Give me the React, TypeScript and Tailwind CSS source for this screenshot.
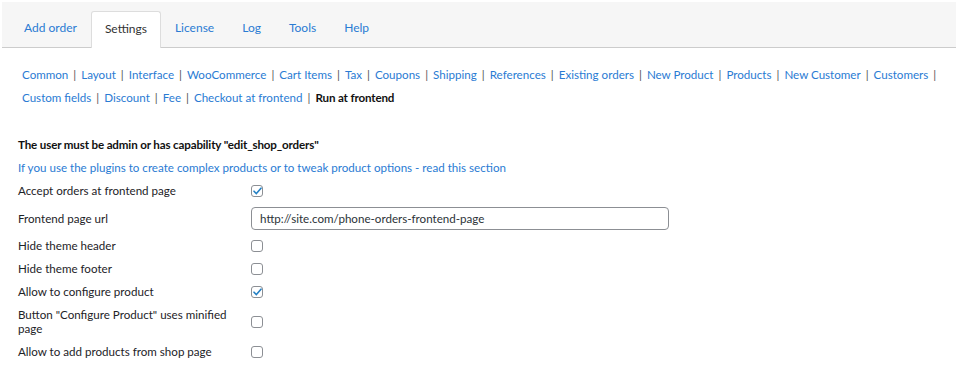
import React from "react";

const tabs = ["Add order", "Settings", "License", "Log", "Tools", "Help"];
const links1 = [
  "Common",
  "Layout",
  "Interface",
  "WooCommerce",
  "Cart Items",
  "Tax",
  "Coupons",
  "Shipping",
  "References",
  "Existing orders",
  "New Product",
  "Products",
  "New Customer",
  "Customers",
];
const links2 = ["Custom fields", "Discount", "Fee", "Checkout at frontend"];

function Checkbox({ checked }: { checked?: boolean }) {
  return (
    <span className="inline-flex h-[12px] w-[12px] items-center justify-center rounded-[3px] border border-[#8c8f94] bg-white">
      {checked && (
        <svg width="9" height="8" viewBox="0 0 9 8" fill="none">
          <path d="M1 4.2 L3.4 6.6 L8 1.2" stroke="#2581c4" strokeWidth="1.6" strokeLinecap="round" strokeLinejoin="round" />
        </svg>
      )}
    </span>
  );
}

function Row({ label, children }: { label: React.ReactNode; children: React.ReactNode }) {
  return (
    <div className="flex items-center pt-[5px] pb-[4px]">
      <div className="w-[233px] shrink-0 pr-[14px] leading-[14px]">{label}</div>
      <div className="flex items-center">{children}</div>
    </div>
  );
}

export default function App() {
  return (
    <div
      className="min-h-[376px] w-[958px] bg-white text-[11.6px] text-[#1d2327]"
      style={{ fontFamily: 'Lato, "Open Sans", sans-serif' }}
    >
      <div className="px-[2px] pt-[2px] text-[12px]">
        <div className="flex h-[46px] items-end border-b border-[#cccccc] bg-[#f6f6f6] pl-[8px]">
          {tabs.map((t) => (
            <div
              key={t}
              className={
                t === "Settings"
                  ? "-mb-px flex h-[37px] items-center rounded-t-[3px] border border-b-0 border-[#dddddd] bg-white px-[13px] text-[#333333]"
                  : "flex h-[37px] items-center px-[14px] text-[#2a7bd3]"
              }
            >
              <span className="-mt-[2px]">{t}</span>
            </div>
          ))}
        </div>
      </div>

      <div className="pl-[22px] pr-[4px] pt-[15px] leading-[23px]">
        <div className="flex flex-wrap">
          {links1.map((l) => (
            <span key={l} className="whitespace-nowrap">
              <span className="text-[#2a7bd3]">{l}</span>
              <span className="px-[5px] text-[#555555]">|</span>
            </span>
          ))}
        </div>
        <div className="flex flex-wrap">
          {links2.map((l) => (
            <span key={l} className="whitespace-nowrap">
              <span className="text-[#2a7bd3]">{l}</span>
              <span className="px-[5px] text-[#555555]">|</span>
            </span>
          ))}
          <span className="font-bold tracking-[-0.15px] text-[#111111]">Run at frontend</span>
        </div>
      </div>

      <div className="px-[18px] pt-[24px]">
        <div className="font-bold leading-[23px] tracking-[-0.15px] text-[#111111]">
          The user must be admin or has capability "edit_shop_orders"
        </div>
        <div className="leading-[23px] text-[#2a7bd3]">
          If you use the plugins to create complex products or to tweak product options - read this section
        </div>
        <Row label="Accept orders at frontend page">
          <Checkbox checked />
        </Row>
        <Row label="Frontend page url">
          <div className="flex h-[23px] w-[418px] items-center rounded-[4px] border border-[#8c8f94] bg-white px-[8px] text-[#2c3338]">
            http://site.com/phone-orders-frontend-page
          </div>
        </Row>
        <Row label="Hide theme header">
          <Checkbox />
        </Row>
        <Row label="Hide theme footer">
          <Checkbox />
        </Row>
        <Row label="Allow to configure product">
          <Checkbox checked />
        </Row>
        <Row label={'Button "Configure Product" uses minified page'}>
          <Checkbox />
        </Row>
        <Row label="Allow to add products from shop page">
          <Checkbox />
        </Row>
      </div>
    </div>
  );
}
